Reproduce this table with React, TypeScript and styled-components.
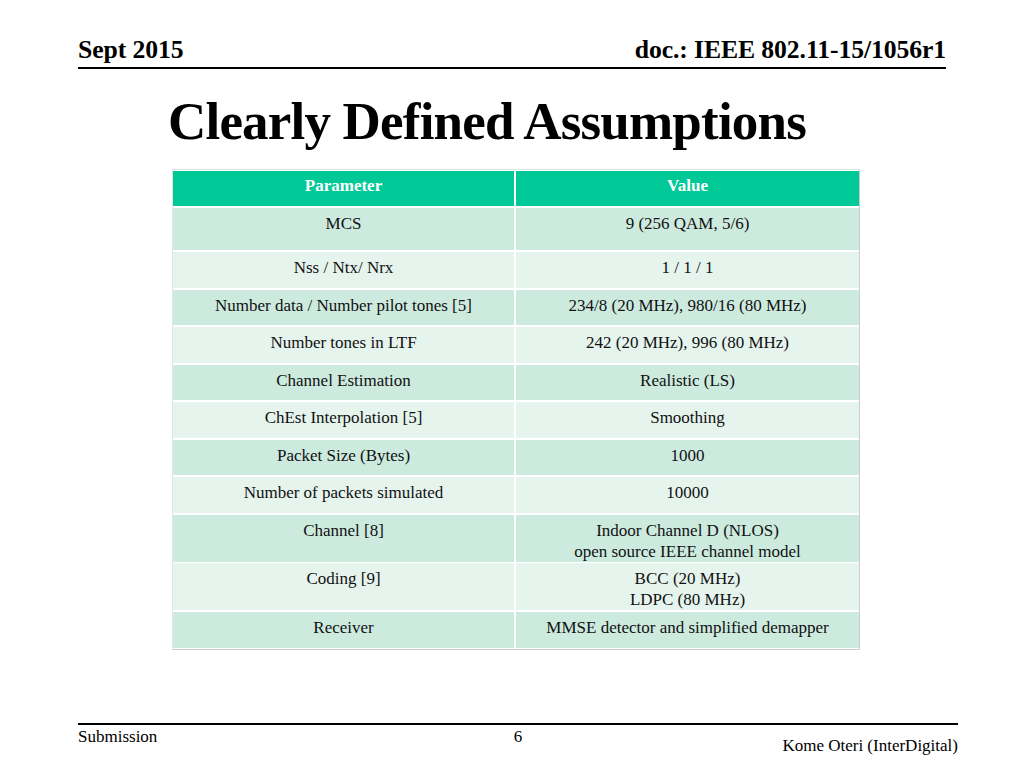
import styled, { createGlobalStyle } from 'styled-components'

const GlobalStyle = createGlobalStyle`
  html, body {
    margin: 0;
    padding: 0;
    background: #ffffff;
  }
  body {
    font-family: "Liberation Serif", "Times New Roman", serif;
    color: #000000;
  }
`

const colors = {
  head: '#00c896',
  rowDark: '#cdeadf',
  rowLight: '#e6f4ee',
  frame: '#c8cfcc',
}

interface Row {
  param: string
  value: string[]
  height: number
}

const rows: Row[] = [
  { param: 'MCS', value: ['9 (256 QAM, 5/6)'], height: 44 },
  { param: 'Nss / Ntx/ Nrx', value: ['1 / 1 / 1'], height: 38 },
  { param: 'Number data / Number pilot tones [5]', value: ['234/8 (20 MHz), 980/16 (80 MHz)'], height: 37 },
  { param: 'Number tones in LTF', value: ['242 (20 MHz), 996 (80 MHz)'], height: 38 },
  { param: 'Channel Estimation', value: ['Realistic (LS)'], height: 37 },
  { param: 'ChEst Interpolation [5]', value: ['Smoothing'], height: 38 },
  { param: 'Packet Size (Bytes)', value: ['1000'], height: 37 },
  { param: 'Number of packets simulated', value: ['10000'], height: 38 },
  { param: 'Channel [8]', value: ['Indoor Channel D (NLOS)', 'open source IEEE channel model'], height: 48 },
  { param: 'Coding [9]', value: ['BCC (20 MHz)', 'LDPC (80 MHz)'], height: 49 },
  { param: 'Receiver', value: ['MMSE detector and simplified  demapper'], height: 38 },
]

const Slide = styled.div`
  width: 1024px;
  height: 768px;
  display: flex;
  flex-direction: column;
  overflow: hidden;
`

const TopBar = styled.header`
  height: 69px;
  margin: 0 78px;
  border-bottom: 2px solid #000;
  display: flex;
  justify-content: space-between;
  align-items: flex-end;
  box-sizing: border-box;
  font-weight: bold;
  font-size: 25.7px;
  line-height: 1;
  padding-bottom: 4px;
  letter-spacing: -0.1px;
`

const Title = styled.h1`
  margin: 22px 0 0 168px;
  font-size: 53px;
  line-height: 60px;
  font-weight: bold;
  letter-spacing: -0.8px;
  height: 78px;
`

const Table = styled.div`
  margin: 0 0 0 172px;
  width: 686px;
  border: 1px solid ${colors.frame};
  border-left-color: #e2e6e4;
  border-top-color: #e2e6e4;
  background: #ffffff;
  display: flex;
  flex-direction: column;
  gap: 2px;
  padding: 1px 0;
`

const TableRow = styled.div<{ $h: number }>`
  display: grid;
  grid-template-columns: 341px 1fr;
  column-gap: 2px;
  height: ${p => p.$h - 2}px;
`

const Cell = styled.div<{ $bg: string; $head?: boolean }>`
  background: ${p => p.$bg};
  color: ${p => (p.$head ? '#ffffff' : '#111111')};
  font-weight: ${p => (p.$head ? 'bold' : 'normal')};
  font-size: 17px;
  text-align: center;
  line-height: 21px;
  padding-top: ${p => (p.$head ? '4px' : '5px')};
  box-sizing: border-box;
`

const Spacer = styled.div`
  flex: 1;
`

const Footer = styled.footer`
  margin: 0 66px 0 78px;
  border-top: 2px solid #000;
  height: 43px;
  display: grid;
  grid-template-columns: 1fr auto 1fr;
  font-size: 17px;
  line-height: 1;
`

const FootText = styled.div<{ $align: string; $top: number }>`
  text-align: ${p => p.$align};
  padding-top: ${p => p.$top}px;
`

export default function App() {
  return (
    <>
      <GlobalStyle />
      <Slide>
        <TopBar>
          <span>Sept 2015</span>
          <span>doc.: IEEE 802.11-15/1056r1</span>
        </TopBar>
        <Title>Clearly Defined Assumptions</Title>
        <Table>
          <TableRow $h={37}>
            <Cell $bg={colors.head} $head>Parameter</Cell>
            <Cell $bg={colors.head} $head>Value</Cell>
          </TableRow>
          {rows.map((r, i) => {
            const bg = i % 2 === 0 ? colors.rowDark : colors.rowLight
            return (
              <TableRow key={r.param} $h={r.height}>
                <Cell $bg={bg}>{r.param}</Cell>
                <Cell $bg={bg}>
                  {r.value.map(v => (
                    <div key={v}>{v}</div>
                  ))}
                </Cell>
              </TableRow>
            )
          })}
        </Table>
        <Spacer />
        <Footer>
          <FootText $align="left" $top={3}>Submission</FootText>
          <FootText $align="center" $top={3}>6</FootText>
          <FootText $align="right" $top={12}>Kome Oteri (InterDigital)</FootText>
        </Footer>
      </Slide>
    </>
  )
}
